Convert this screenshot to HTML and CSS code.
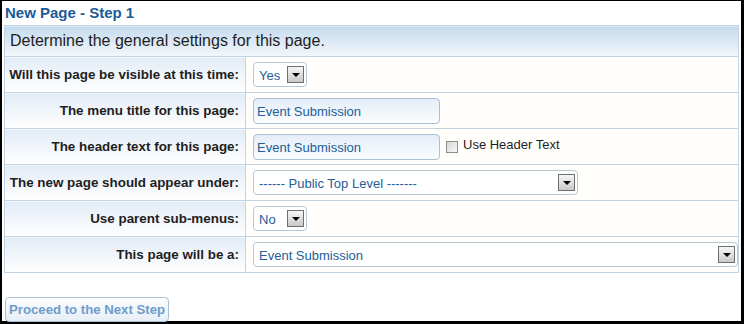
FILE: index.html
```html
<!DOCTYPE html>
<html lang="en">

<head>
    <meta charset="UTF-8">
    <title>New Page - Step 1</title>
    <link rel="stylesheet" href="styles.css">
</head>

<body>
    <div class="page">
        <h1 class="title">New Page - Step 1</h1>
        <table class="settings">
            <tr>
                <th colspan="2" class="intro">Determine the general settings for this page.</th>
            </tr>
            <tr>
                <td class="label">Will this page be visible at this time:</td>
                <td class="value">
                    <div class="dropdown small"><span class="text">Yes</span><span class="arrow"></span></div>
                </td>
            </tr>
            <tr>
                <td class="label">The menu title for this page:</td>
                <td class="value"><input class="field" type="text" value="Event Submission"></td>
            </tr>
            <tr>
                <td class="label">The header text for this page:</td>
                <td class="value">
                    <input class="field" type="text" value="Event Submission"><label class="check"><span class="box"></span>Use Header Text</label>
                </td>
            </tr>
            <tr>
                <td class="label">The new page should appear under:</td>
                <td class="value">
                    <div class="dropdown medium"><span class="text">------ Public Top Level -------</span><span class="arrow"></span></div>
                </td>
            </tr>
            <tr>
                <td class="label">Use parent sub-menus:</td>
                <td class="value">
                    <div class="dropdown small"><span class="text">No</span><span class="arrow"></span></div>
                </td>
            </tr>
            <tr>
                <td class="label">This page will be a:</td>
                <td class="value">
                    <div class="dropdown wide"><span class="text">Event Submission</span><span class="arrow"></span></div>
                </td>
            </tr>
        </table>
        <button class="next" type="button">Proceed to the Next Step</button>
    </div>
</body>

</html>
```

FILE: styles.css
```css
html,
body {
    margin: 0;
    background: #000;
}

body {
    font-family: "Liberation Sans", Arial, sans-serif;
    padding: 1px 3px 3px 2px;
}

.page {
    background: #fff;
    height: 320px;
    padding: 0 2px;
    box-sizing: border-box;
}

.title {
    margin: 0;
    padding: 3px 0 0 1px;
    height: 21px;
    font-size: 15px;
    font-weight: bold;
    color: #1b5b98;
}

.settings {
    width: 100%;
    border-collapse: collapse;
    border: 1px solid #b8cadb;
}

.settings td,
.settings th {
    border: 1px solid #c4d3e1;
    padding: 0;
}

.intro {
    height: 30px;
    text-align: left;
    font-weight: normal;
    font-size: 16px;
    color: #1e1e1e;
    padding-left: 5px !important;
    background: linear-gradient(#c5dbef, #f3f7fb);
}

.label {
    width: 234px;
    height: 35px;
    padding-right: 6px !important;
    text-align: right;
    font-size: 13.4px;
    font-weight: bold;
    color: #1e1e1e;
    background: linear-gradient(#e2ecf6, #ffffff);
}

.value {
    padding-left: 7px !important;
    background: #fffefb;
    font-size: 13px;
}

.field {
    width: 187px;
    height: 26px;
    box-sizing: border-box;
    border: 1px solid #a9bfd3;
    border-radius: 4px;
    padding: 2px 3px 0;
    font: 13px "Liberation Sans", Arial, sans-serif;
    color: #235d98;
    background: linear-gradient(#e4edf6, #fbfdff);
    vertical-align: middle;
}

.check {
    display: inline-flex;
    align-items: center;
    margin-left: 6px;
    color: #1e1e1e;
    vertical-align: middle;
    position: relative;
    top: -2px;
}

.box {
    width: 10px;
    height: 10px;
    border: 1px solid #8e8e8e;
    background: linear-gradient(135deg, #d5d5d5, #fafafa);
    margin-right: 5px;
    position: relative;
    top: 2px;
}

.dropdown {
    display: flex;
    align-items: center;
    justify-content: space-between;
    height: 25px;
    box-sizing: border-box;
    border: 1px solid #b6c8d8;
    border-radius: 4px;
    padding: 0 2px 0 5px;
    color: #235d98;
    background: #fff;
}

.dropdown .text {
    padding-top: 1px;
}

.small {
    width: 54px;
}

.medium {
    width: 325px;
}

.wide {
    width: 485px;
}

.arrow {
    width: 15px;
    height: 15px;
    border: 1px solid #6f6f6f;
    background: linear-gradient(#f6f6f6, #c9c9c9);
    position: relative;
}

.arrow::after {
    content: "";
    position: absolute;
    left: 4px;
    top: 6px;
    border-left: 4px solid transparent;
    border-right: 4px solid transparent;
    border-top: 4px solid #000;
}

.next {
    margin: 24px 0 0 1px;
    height: 25px;
    padding: 0 3px;
    border: 1px solid #a8bfd4;
    border-radius: 4px;
    background: linear-gradient(#fdfeff, #e6eef6);
    color: #6f9ccb;
    font: bold 13.2px "Liberation Sans", Arial, sans-serif;
}
```
